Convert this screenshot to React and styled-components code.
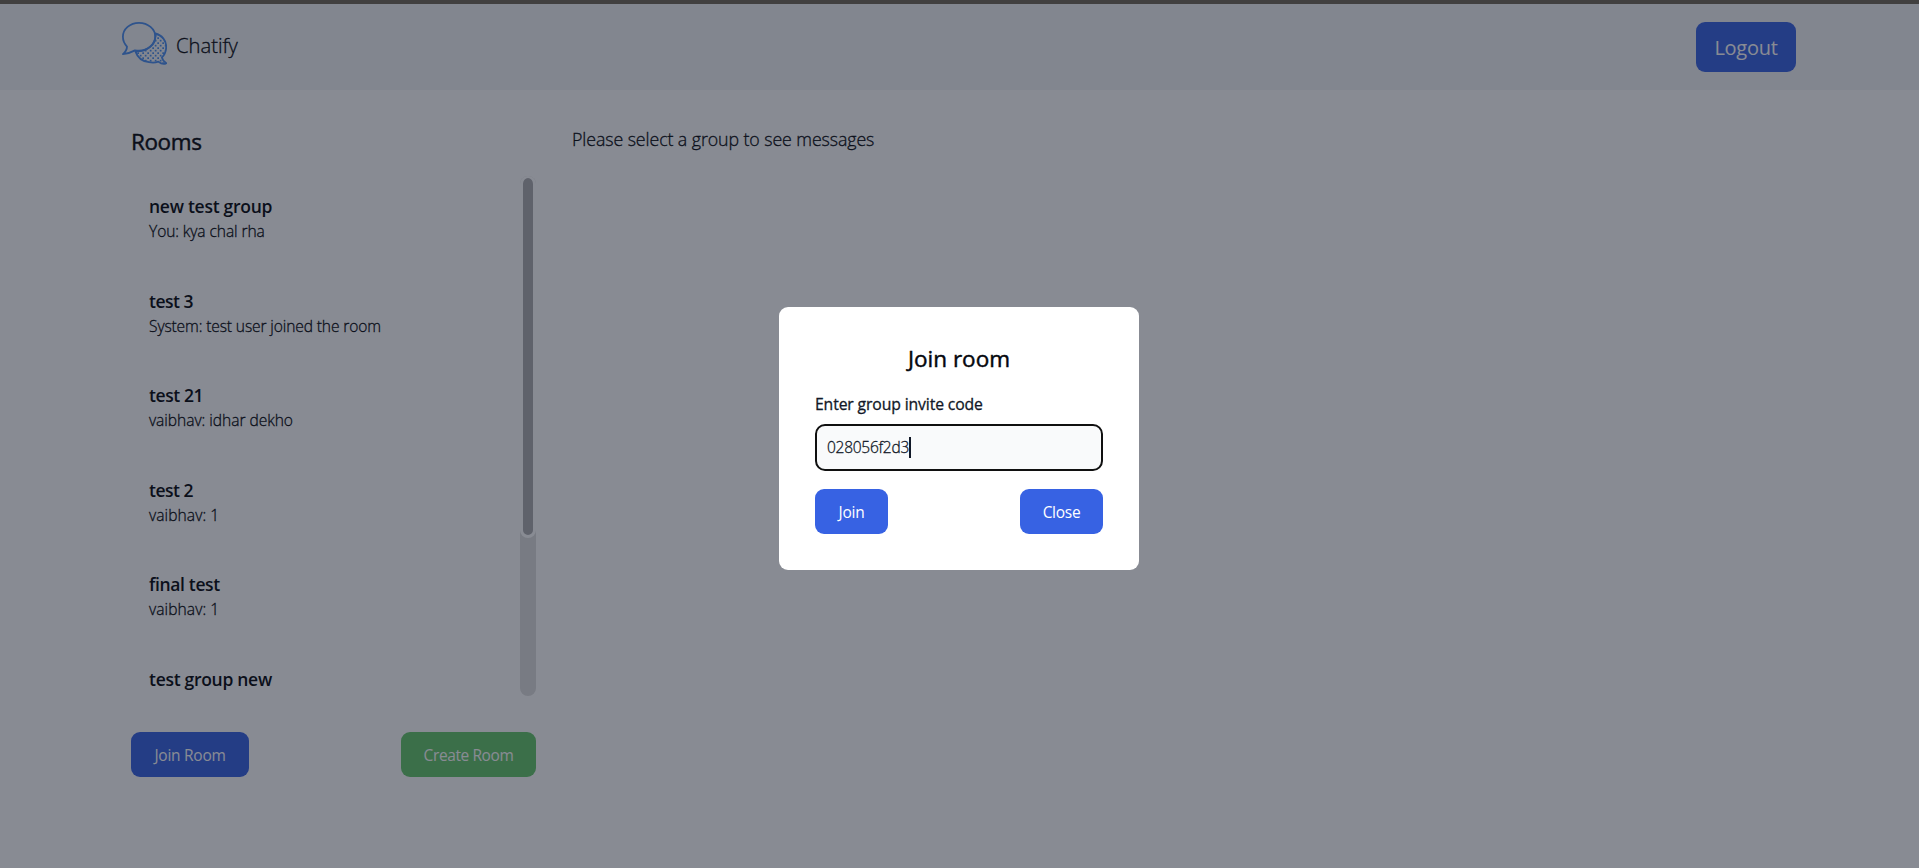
import React from "react";
import styled, { createGlobalStyle } from "styled-components";

const GlobalStyle = createGlobalStyle`
  *, *::before, *::after { box-sizing: border-box; }
  html { font-size: 18px; }
  body {
    margin: 0;
    background: #fff;
    color: #05070d;
    font-family: "Open Sans", "Noto Sans", sans-serif;
    overflow: hidden;
  }
  h1, h2, h3, p { margin: 0; }
  button, input { font: inherit; }
`;

const Page = styled.div`
  height: 868px;
  border-top: 4px solid #414040;
`;

const Header = styled.header`
  display: flex;
  align-items: flex-start;
  justify-content: space-between;
  height: 86px;
  padding: 18px 123px 0 122px;
  background: #f3f4f6;
`;

const Brand = styled.div`
  display: flex;
  align-items: flex-start;
  gap: 9px;
`;

const Logo = styled.svg`
  display: block;
  width: 45px;
  height: 45px;
`;

const BrandName = styled.span`
  padding-top: 8px;
  font-size: 20.25px;
  line-height: 31.5px;
  font-weight: 300;
  letter-spacing: -0.02px;
  -webkit-text-stroke: 0.3px currentColor;
`;

const Button = styled.button`
  border: 0;
  border-radius: 9px;
  padding: 0;
  width: ${(p) => p.$width}px;
  height: ${(p) => (p.$large ? 50 : 45)}px;
  background: ${(p) => (p.$tone === "green" ? "#65c66b" : "#3762e3")};
  color: #fff;
  font-size: ${(p) => (p.$large ? 20 : 15.5)}px;
  font-weight: 400;
  letter-spacing: ${(p) => p.$track ?? -0.27}px;
`;

const Main = styled.main`
  display: flex;
  gap: 36px;
  padding: 36px 131px;
`;

const Sidebar = styled.section`
  width: 405px;
`;

const Heading = styled.h2`
  font-size: 22.5px;
  line-height: 31.5px;
  font-weight: 400;
  letter-spacing: ${(p) => p.$track ?? 0}px;
  -webkit-text-stroke: 0.45px currentColor;
`;

const RoomsPanel = styled.div`
  display: flex;
  height: 520px;
  margin-top: 18.5px;
`;

const RoomList = styled.ul`
  flex: 1;
  margin: 0;
  padding: 0;
  list-style: none;
  overflow: hidden;
`;

const RoomItem = styled.li`
  height: 85.5px;
  margin-bottom: 9px;
  padding: 17px 18px 0;
`;

const RoomName = styled.h3`
  font-size: 17.5px;
  line-height: 27px;
  font-weight: 600;
  letter-spacing: ${(p) => p.$track}px;
`;

const LastMessage = styled.p`
  font-size: 15.6px;
  line-height: 22.5px;
  font-weight: 300;
  letter-spacing: ${(p) => p.$track}px;
  -webkit-text-stroke: 0.3px currentColor;
`;

const ScrollTrack = styled.div`
  width: 16px;
  border-radius: 8px;
  background: #dedede;
`;

const ScrollThumb = styled.div`
  height: 362px;
  border: 3px solid #fff;
  border-top-width: 2px;
  border-radius: 8px;
  background: #acacaf;
`;

const Actions = styled.div`
  display: flex;
  justify-content: space-between;
  margin-top: ${(p) => p.$gap}px;
`;

const EmptyNotice = styled.p`
  font-size: 17.8px;
  line-height: 27px;
  font-weight: 300;
  letter-spacing: -0.09px;
  -webkit-text-stroke: 0.3px currentColor;
`;

const Overlay = styled.div`
  position: absolute;
  inset: 4px 0 0 0;
  display: flex;
  align-items: center;
  justify-content: center;
  padding: 5px 1px 0 0;
  background: rgba(17, 24, 39, 0.5);
`;

const Dialog = styled.section`
  width: 360px;
  height: 263px;
  padding: 36px;
  border-radius: 9px;
  background: #fff;
  color: #05070d;

  ${Heading} { text-align: center; }
`;

const Label = styled.label`
  display: block;
  margin-top: 18px;
  font-size: 15.75px;
  line-height: 22.5px;
  font-weight: 400;
  letter-spacing: -0.13px;
  -webkit-text-stroke: 0.3px currentColor;
  color: #111827;
`;

const CodeField = styled.div`
  display: flex;
  align-items: center;
  height: 47px;
  margin-top: 9px;
  padding: 0 10px 1px;
  border: 2px solid #101010;
  border-radius: 10px;
  background: #f9fafb;
  color: #111827;
  font-size: 15.5px;
  font-weight: 300;
  letter-spacing: -0.27px;
  -webkit-text-stroke: 0.3px currentColor;
`;

const Caret = styled.span`
  width: 2px;
  height: 21px;
  background: #111827;
`;

const rooms = [
  { name: "new test group", message: "You: kya chal rha", nt: -0.27, mt: -0.1 },
  { name: "test 3", message: "System: test user joined the room", nt: -0.5, mt: -0.13 },
  { name: "test 21", message: "vaibhav: idhar dekho", nt: -0.42, mt: -0.04 },
  { name: "test 2", message: "vaibhav: 1", nt: -0.5, mt: 0.08 },
  { name: "final test", message: "vaibhav: 1", nt: -0.35, mt: 0.08 },
  { name: "test group new", message: "", nt: -0.29, mt: 0 },
];

function ChatLogo() {
  return (
    <Logo viewBox="0 0 45 45" fill="none" stroke="#4b8ff0" strokeWidth="1.8" strokeLinejoin="round" aria-hidden="true">
      <defs>
        <pattern id="dots" width="5" height="5" patternUnits="userSpaceOnUse">
          <rect x="0.3" y="0.3" width="1.7" height="1.7" fill="#4b8ff0" stroke="none" />
          <rect x="2.8" y="2.8" width="1.7" height="1.7" fill="#4b8ff0" stroke="none" />
        </pattern>
      </defs>
      <path
        fill="url(#dots)"
        d="M33.3 11.5C40 13 44.2 18.5 44.2 24.7C44.2 29.3 42.6 32.8 39.9 35.4C40.4 38 42 39.8 44.3 41.2C41.8 42.7 38.8 41.6 36.3 39.6C33 41 29.5 40.7 27 40.2C20.5 39.5 15.5 35.5 13.4 29.4C24 30 34.5 23 33.3 11.5Z"
      />
      <path d="M5 24.6C2.4 21.8 .9 18.4 .9 14.8C.9 7 8 .9 17 .9S33.3 7 33.3 14.8S26 28.7 17 28.7C15.6 28.7 14.3 28.6 13 28.4C9.5 30.4 5 31.6 .9 32.2C3.3 30.2 5 27.5 5 24.6Z" />
    </Logo>
  );
}

export default function App() {
  return (
    <>
      <GlobalStyle />
      <Page>
        <Header>
          <Brand>
            <ChatLogo />
            <BrandName>Chatify</BrandName>
          </Brand>
          <Button $large $width={100}>Logout</Button>
        </Header>
        <Main>
          <Sidebar>
            <Heading $track={-0.4}>Rooms</Heading>
            <RoomsPanel>
              <RoomList>
                {rooms.map((r) => (
                  <RoomItem key={r.name}>
                    <RoomName $track={r.nt}>{r.name}</RoomName>
                    <LastMessage $track={r.mt}>{r.message}</LastMessage>
                  </RoomItem>
                ))}
              </RoomList>
              <ScrollTrack>
                <ScrollThumb />
              </ScrollTrack>
            </RoomsPanel>
            <Actions $gap={36}>
              <Button $width={118}>Join Room</Button>
              <Button $width={135} $tone="green" $track={-0.4}>Create Room</Button>
            </Actions>
          </Sidebar>
          <EmptyNotice>Please select a group to see messages</EmptyNotice>
        </Main>
      </Page>
      <Overlay>
        <Dialog role="dialog" aria-label="Join room">
          <Heading>Join room</Heading>
          <Label>Enter group invite code</Label>
          <CodeField>
            <span>028056f2d3</span>
            <Caret />
          </CodeField>
          <Actions $gap={18}>
            <Button $width={73}>Join</Button>
            <Button $width={83}>Close</Button>
          </Actions>
        </Dialog>
      </Overlay>
    </>
  );
}
